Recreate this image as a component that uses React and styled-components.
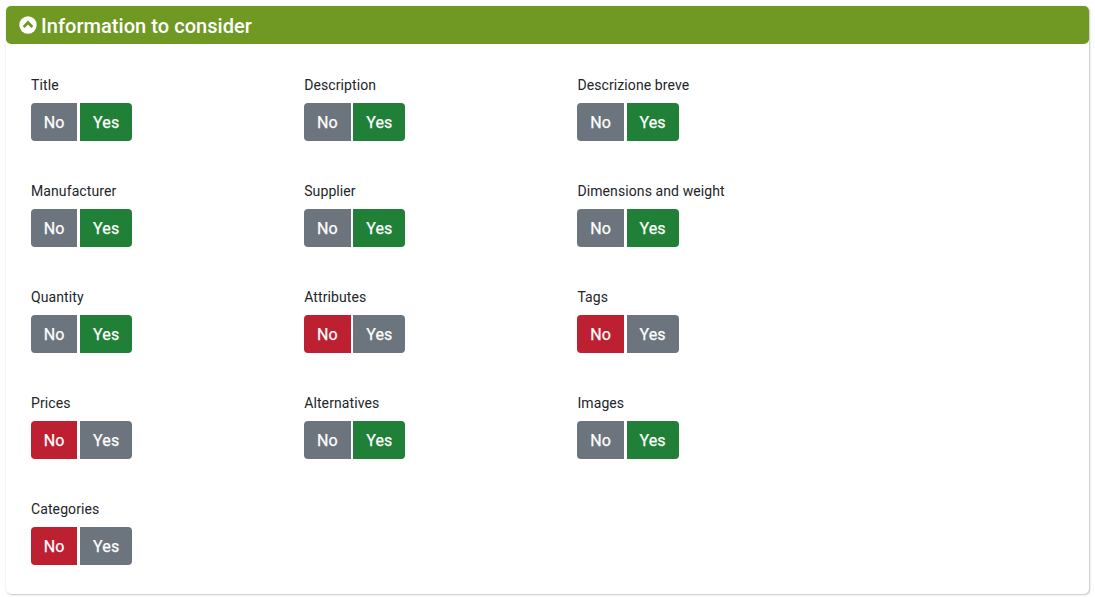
import styled, { createGlobalStyle } from "styled-components";

const GlobalStyle = createGlobalStyle`
  html, body {
    margin: 0;
    padding: 0;
    background: #fff;
    font-family: Roboto, "Liberation Sans", sans-serif;
  }
`;

const Page = styled.div`
  width: 1095px;
  height: 597px;
  padding: 6px 6px 0 6px;
  box-sizing: border-box;
  overflow: hidden;
`;

const Card = styled.section`
  width: 1083px;
  height: 588px;
  box-sizing: border-box;
  background: #fff;
  border-radius: 5px;
  box-shadow: 1px 1px 2px rgba(0, 0, 0, 0.2), 0 0 2px rgba(0, 0, 0, 0.12);
`;

const CardHeader = styled.header`
  height: 38px;
  display: flex;
  align-items: center;
  gap: 4px;
  padding-left: 13px;
  background: #6f9923;
  border-radius: 5px;
  color: #fff;
  font-size: 20px;
  font-weight: 500;
  letter-spacing: 0.05px;
`;

const HeaderTitle = styled.span`
  line-height: 38px;
  padding-top: 1px;
`;

const Fields = styled.div`
  display: grid;
  grid-template-columns: repeat(3, 273.2px);
  grid-auto-rows: 106px;
  padding: 33px 25px 0;
`;

const Field = styled.div`
  display: flex;
  flex-direction: column;
  align-items: flex-start;
`;

const Label = styled.label`
  height: 17px;
  line-height: 17px;
  margin-bottom: 9px;
  font-size: 14px;
  letter-spacing: 0.1px;
  color: #212529;
`;

const Toggle = styled.div`
  display: flex;
  gap: 2.8px;
`;

const activeColors = { no: "#bd2031", yes: "#218038" };

const ToggleButton = styled.button`
  width: ${(p) => (p.$kind === "no" ? "46.4px" : "52px")};
  height: 38px;
  padding: 0;
  border: none;
  border-radius: ${(p) => (p.$kind === "no" ? "4px 0 0 4px" : "0 4px 4px 0")};
  background: ${(p) => (p.$active ? activeColors[p.$kind] : "#6c757d")};
  color: #fff;
  font-family: inherit;
  font-size: 16px;
  font-weight: 400;
  letter-spacing: 0.1px;
  -webkit-text-stroke: 0.25px #fff;
`;

const fields = [
  ["Title", "yes"],
  ["Description", "yes"],
  ["Descrizione breve", "yes"],
  ["Manufacturer", "yes"],
  ["Supplier", "yes"],
  ["Dimensions and weight", "yes"],
  ["Quantity", "yes"],
  ["Attributes", "no"],
  ["Tags", "no"],
  ["Prices", "no"],
  ["Alternatives", "yes"],
  ["Images", "yes"],
  ["Categories", "no"],
];

function ChevronCircleUp() {
  return (
    <svg width="18" height="18" viewBox="0 0 18 18">
      <circle cx="9" cy="9" r="8.7" fill="#fff" />
      <path d="M4.7 10.9 L9 6.6 L13.3 10.9" fill="none" stroke="#6f9923" strokeWidth="2.8" />
    </svg>
  );
}

export default function App() {
  return (
    <Page>
      <GlobalStyle />
      <Card>
        <CardHeader>
          <ChevronCircleUp />
          <HeaderTitle>Information to consider</HeaderTitle>
        </CardHeader>
        <Fields>
          {fields.map(([name, value]) => (
            <Field key={name}>
              <Label>{name}</Label>
              <Toggle>
                <ToggleButton $kind="no" $active={value === "no"}>No</ToggleButton>
                <ToggleButton $kind="yes" $active={value === "yes"}>Yes</ToggleButton>
              </Toggle>
            </Field>
          ))}
        </Fields>
      </Card>
    </Page>
  );
}
